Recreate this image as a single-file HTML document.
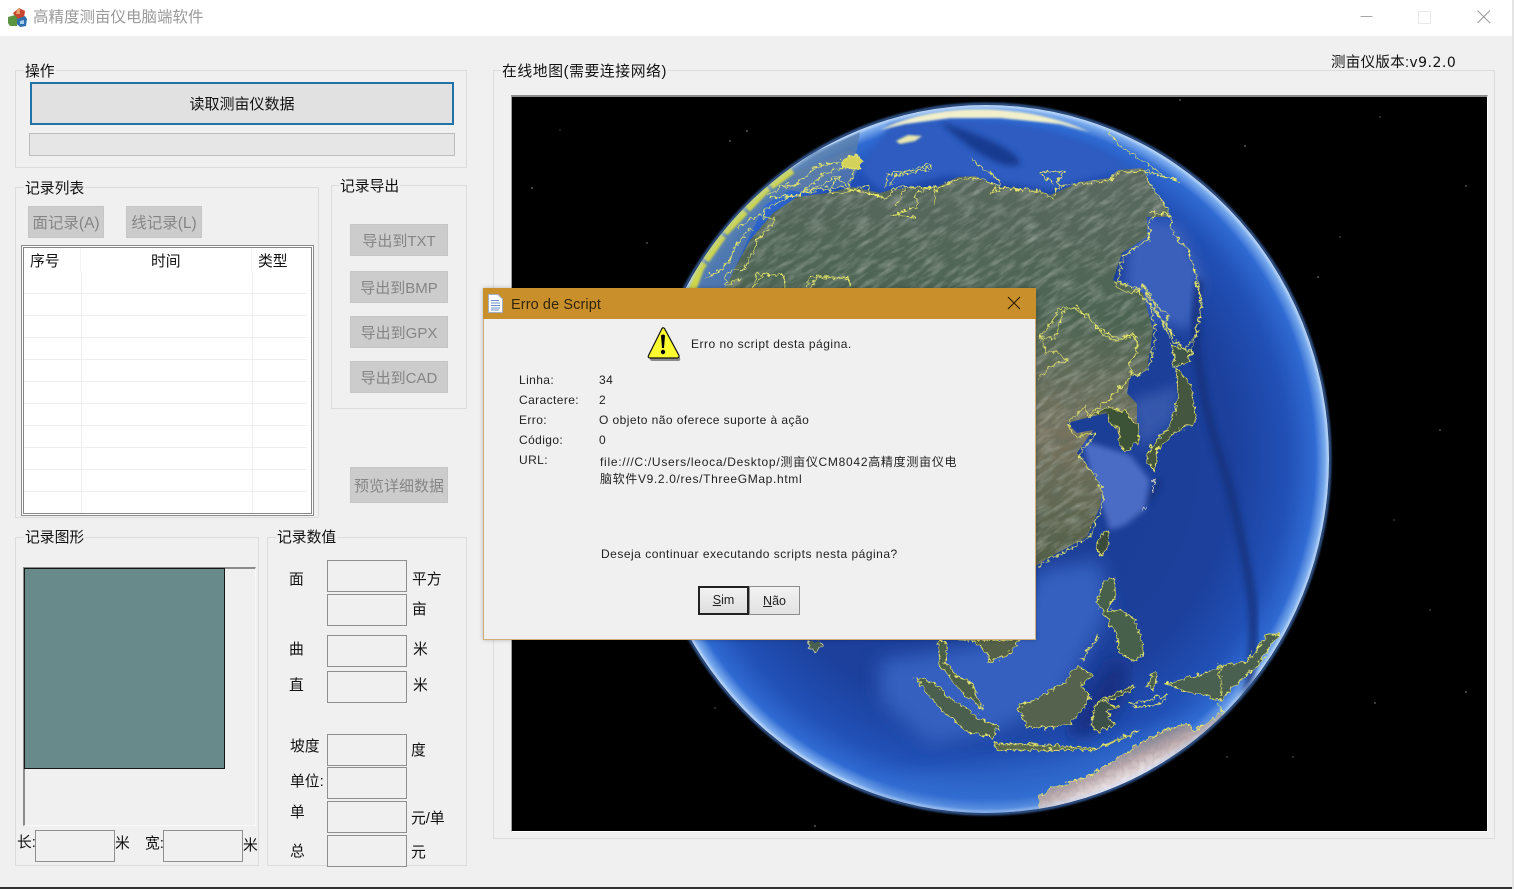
<!DOCTYPE html>
<html><head><meta charset="utf-8"><title>高精度测亩仪电脑端软件</title>
<style>
html,body{margin:0;padding:0;background:#f0f0f0;width:1514px;height:889px;overflow:hidden}
body{position:relative;font-family:"Liberation Sans","Noto Sans CJK SC",sans-serif;color:#111}
.a,.t,.g,.b,.i,.r{position:absolute}
.t{font-size:14.8px;line-height:20px;white-space:nowrap;margin-top:2px}
.g{border:1px solid #dcdcdc;box-sizing:border-box}
.b{background:#cccccc;color:#858585;font-size:15.5px;text-align:center;box-sizing:border-box;white-space:nowrap;border:1px solid #c6c6c6;padding-top:3px}
.i{border:1px solid #8f8f8f;background:#f0f0f0;box-sizing:border-box;width:80px;height:32px;left:327px}
.l{background:#f0f0f0;padding:0 1px}
.r{left:24px;width:283px;height:1px;background:#eeeeee}
.d{font-size:12px;line-height:16px;color:#222;letter-spacing:.5px;white-space:nowrap;position:absolute}
.m{letter-spacing:.4px}
</style></head><body>
<!-- title bar -->
<div class="a" style="left:0;top:0;width:1514px;height:36px;background:#fff"></div>
<svg class="a" style="left:6px;top:6px" width="24" height="22" viewBox="0 0 24 22">
<path d="M7 7 L13 2 L19 5 L18 12 L11 14Z" fill="#c8452f"/>
<path d="M11 3 L14 2 L14 8 L10 8Z" fill="#e8a070"/>
<path d="M2 11 L9 9 L12 13 L11 20 L4 20 L2 17Z" fill="#5b9440"/>
<path d="M11 13 L19 10 L21 13 L20 20 L14 21 L11 18Z" fill="#2e6fb0"/>
<path d="M14 15 L18 14 L18 18 L14 18Z" fill="#a9cce8"/>
</svg>
<div class="t" style="left:33px;top:6px;font-size:15.5px;color:#9a9a9a">高精度测亩仪电脑端软件</div>
<svg class="a" style="left:1350px;top:0" width="150" height="36" viewBox="1350 0 150 36" fill="none">
<path d="M1360.5 16.5H1372.5" stroke="#a8a8a8"/>
<rect x="1418.5" y="11.5" width="12" height="12" stroke="#e8e8e8"/>
<path d="M1477.5 10.5L1490 23M1490 10.5L1477.5 23" stroke="#999"/>
</svg>
<!-- version -->
<div class="t" style="left:1331px;top:51px;font-size:14.5px;letter-spacing:.3px">测亩仪版本:<span style="font-family:'DejaVu Sans';font-size:14px;letter-spacing:.5px">v9.2.0</span></div>

<!-- 操作 -->
<div class="g" style="left:15px;top:70px;width:452px;height:98px"></div>
<div class="t l" style="left:24px;top:60px">操作</div>
<div class="a" style="left:30px;top:82px;width:424px;height:43px;box-sizing:border-box;border:2px solid #1f73a8;background:#e1e1e1;text-align:center;font-size:15px;line-height:41px;overflow:hidden">读取测亩仪数据</div>
<div class="a" style="left:29px;top:133px;width:426px;height:23px;box-sizing:border-box;border:1px solid #bcbcbc;background:#e6e6e6"></div>

<!-- 记录列表 -->
<div class="g" style="left:15px;top:187px;width:304px;height:331px"></div>
<div class="t l" style="left:24px;top:177px">记录列表</div>
<div class="b" style="left:28px;top:206px;width:76px;height:32px;line-height:28px">面记录(A)</div>
<div class="b" style="left:126px;top:206px;width:76px;height:32px;line-height:28px">线记录(L)</div>
<div class="a" style="left:21px;top:245px;width:293px;height:271px;box-sizing:border-box;border:1px solid #8a8a8a;background:#fff">
 <div style="position:absolute;left:1px;top:1px;right:1px;bottom:1px;border:1px solid #858585"></div>
</div>
<div class="a" style="left:81px;top:272px;width:1px;height:241px;background:#eeeeee"></div>
<div class="a" style="left:252px;top:272px;width:1px;height:241px;background:#eeeeee"></div>
<div class="a" style="left:80px;top:248px;width:1px;height:24px;background:#f4f4f4"></div>
<div class="a" style="left:251px;top:248px;width:1px;height:24px;background:#f4f4f4"></div>
<div class="r" style="top:293px"></div><div class="r" style="top:315px"></div><div class="r" style="top:337px"></div><div class="r" style="top:359px"></div><div class="r" style="top:381px"></div><div class="r" style="top:403px"></div><div class="r" style="top:425px"></div><div class="r" style="top:447px"></div><div class="r" style="top:469px"></div><div class="r" style="top:491px"></div>
<div class="t" style="left:30px;top:250px">序号</div>
<div class="t" style="left:151px;top:250px">时间</div>
<div class="t" style="left:258px;top:250px">类型</div>

<!-- 记录导出 -->
<div class="g" style="left:331px;top:185px;width:136px;height:224px"></div>
<div class="t l" style="left:339px;top:175px">记录导出</div>
<div class="b" style="left:350px;top:224px;width:98px;height:32px;line-height:28px;font-size:15px">导出到TXT</div>
<div class="b" style="left:350px;top:271px;width:98px;height:32px;line-height:28px;font-size:15px">导出到BMP</div>
<div class="b" style="left:350px;top:316px;width:98px;height:32px;line-height:28px;font-size:15px">导出到GPX</div>
<div class="b" style="left:350px;top:361px;width:98px;height:32px;line-height:28px;font-size:15px">导出到CAD</div>
<div class="b" style="left:350px;top:467px;width:98px;height:36px;line-height:32px;font-size:15px">预览详细数据</div>

<!-- 记录图形 -->
<div class="g" style="left:15px;top:537px;width:244px;height:329px"></div>
<div class="t l" style="left:24px;top:526px">记录图形</div>
<div class="a" style="left:23px;top:567px;width:233px;height:259px;box-sizing:border-box;border-top:2px solid #8a8a8a;border-left:2px solid #8a8a8a;border-right:1px solid #fafafa;border-bottom:1px solid #fafafa"></div>
<div class="a" style="left:24px;top:568px;width:201px;height:201px;box-sizing:border-box;border:1px solid #161616;background:#688a8a"></div>
<div class="t" style="left:17px;top:831px">长:</div>
<div class="i" style="left:35px;top:830px"></div>
<div class="t" style="left:115px;top:832px">米</div>
<div class="t" style="left:145px;top:832px">宽:</div>
<div class="i" style="left:163px;top:830px"></div>
<div class="t" style="left:243px;top:834px">米</div>

<!-- 记录数值 -->
<div class="g" style="left:267px;top:537px;width:200px;height:329px"></div>
<div class="t l" style="left:276px;top:526px">记录数值</div>
<div class="i" style="top:560px"></div>
<div class="i" style="top:594px"></div>
<div class="i" style="top:635px"></div>
<div class="i" style="top:671px"></div>
<div class="i" style="top:734px"></div>
<div class="i" style="top:767px"></div>
<div class="i" style="top:801px"></div>
<div class="i" style="top:835px"></div>
<div class="t" style="left:289px;top:568px">面</div>
<div class="t" style="left:289px;top:638px">曲</div>
<div class="t" style="left:289px;top:674px">直</div>
<div class="t" style="left:290px;top:735px">坡度</div>
<div class="t" style="left:290px;top:770px">单位:</div>
<div class="t" style="left:290px;top:801px">单</div>
<div class="t" style="left:290px;top:840px">总</div>
<div class="t" style="left:412px;top:568px">平方</div>
<div class="t" style="left:412px;top:598px">亩</div>
<div class="t" style="left:413px;top:638px">米</div>
<div class="t" style="left:413px;top:674px">米</div>
<div class="t" style="left:411px;top:739px">度</div>
<div class="t" style="left:411px;top:807px">元/单</div>
<div class="t" style="left:411px;top:841px">元</div>

<!-- map group -->
<div class="g" style="left:493px;top:70px;width:1002px;height:769px"></div>
<div class="t l" style="left:501px;top:60px;letter-spacing:.6px">在线地图(需要连接网络)</div>
<div class="a" style="left:511px;top:95px;width:977px;height:737px;box-sizing:border-box;border-top:2px solid #8c8c8c;border-left:1px solid #a0a0a0;border-right:1px solid #fff;border-bottom:1px solid #fff"></div>
<svg class="a" style="left:512px;top:97px" width="975" height="734" viewBox="512 97 975 734">
<defs>
<radialGradient id="oc" cx=".5" cy=".5" r=".5">
<stop offset="0" stop-color="#1a3c92"/><stop offset=".72" stop-color="#1c409c"/><stop offset=".88" stop-color="#2150b6"/><stop offset=".96" stop-color="#2f6ad2"/><stop offset=".99" stop-color="#7eaeee"/><stop offset="1" stop-color="#c8dffa"/>
</radialGradient>
<linearGradient id="ld" gradientUnits="userSpaceOnUse" x1="1100" y1="150" x2="1050" y2="620">
<stop offset="0" stop-color="#5d6a62"/><stop offset=".35" stop-color="#4c6452"/><stop offset=".6" stop-color="#77735f"/><stop offset=".78" stop-color="#5e6650"/><stop offset="1" stop-color="#46563c"/>
</linearGradient>
<linearGradient id="au" gradientUnits="userSpaceOnUse" x1="1040" y1="490" x2="1115" y2="625"><stop offset="0" stop-color="#4a6cb0"/><stop offset=".4" stop-color="#7c7f90"/><stop offset=".7" stop-color="#b8a8ac"/><stop offset="1" stop-color="#f0e8ea"/></linearGradient>
<filter id="n" x="-10%" y="-10%" width="120%" height="120%"><feTurbulence type="fractalNoise" baseFrequency=".05 .2" numOctaves="4" seed="4"/><feColorMatrix values="0 0 0 0 .62  0 0 0 0 .65  0 0 0 0 .60  1.6 0 0 0 -.66"/></filter>
<filter id="n2" x="-10%" y="-10%" width="120%" height="120%"><feTurbulence type="fractalNoise" baseFrequency=".07 .16" numOctaves="4" seed="11"/><feColorMatrix values="0 0 0 0 .10  0 0 0 0 .15  0 0 0 0 .12  1.6 0 0 0 -.66"/></filter>
<filter id="b1"><feGaussianBlur stdDeviation="1"/></filter>
<filter id="b3"><feGaussianBlur stdDeviation="3"/></filter>
<filter id="b5"><feGaussianBlur stdDeviation="6"/></filter>
<filter id="b8"><feGaussianBlur stdDeviation="9"/></filter>
<filter id="jit" filterUnits="userSpaceOnUse" x="512" y="97" width="975" height="734"><feTurbulence type="turbulence" baseFrequency=".13" numOctaves="2" seed="7" result="t"/><feDisplacementMap in="SourceGraphic" in2="t" scale="7" xChannelSelector="R" yChannelSelector="G"/><feGaussianBlur stdDeviation=".3"/></filter>
<clipPath id="gc"><ellipse cx="986" cy="459" rx="343" ry="354"/></clipPath>
<clipPath id="lc"><path id="landp" d="M723 290 L750 240 773 213 797 197 827 193 853 187 880 193 890 190 916 187 937 187 958 177 975 176 1000 187 1038 190 1050 195 1080 182 1109 178 1118 170 1143 168 1151 187 1166 207 1170 217 1147 217 1147 237 1122 253 1113 280 1143 293 1153 330 1147 370 1130 377 1127 393 1137 404 1137 440 1123 450 1116 427 1107 413 1090 417 1067 423 1077 433 1093 430 1077 453 1093 473 1102 490 1100 507 1087 537 1050 557 1037 565 1030 575 1030 600 700 600Z"/></clipPath>
</defs>
<rect x="512" y="97" width="975" height="734" fill="#000"/>
<g fill="#8a8f98"><circle cx="747" cy="131" r=".8"/><circle cx="730" cy="141" r=".7"/><circle cx="532" cy="188" r=".8"/><circle cx="647" cy="243" r=".7"/><circle cx="1180" cy="100" r=".7"/><circle cx="1245" cy="146" r=".8"/><circle cx="1318" cy="277" r=".8"/><circle cx="1340" cy="237" r=".6"/><circle cx="1380" cy="117" r=".6"/><circle cx="1466" cy="186" r=".7"/><circle cx="1440" cy="430" r=".7"/><circle cx="1394" cy="520" r=".6"/><circle cx="1293" cy="757" r=".6"/><circle cx="1375" cy="703" r=".7"/><circle cx="1227" cy="757" r=".6"/><circle cx="1466" cy="692" r=".8"/><circle cx="815" cy="826" r=".8"/><circle cx="715" cy="708" r=".6"/><circle cx="562" cy="470" r=".6"/><circle cx="560" cy="130" r=".5"/><circle cx="1430" cy="610" r=".6"/></g>
<ellipse cx="986" cy="459" rx="344" ry="355" fill="none" stroke="#4a80d8" stroke-width="2.5" opacity=".8" filter="url(#b1)"/>
<ellipse cx="986" cy="459" rx="343" ry="354" fill="url(#oc)"/>
<g clip-path="url(#gc)">
 <!-- ocean shading -->
 <path d="M890 125 C960 110 1080 125 1130 170 L1143 165 1118 170 1050 190 950 175 880 190 860 170Z" fill="#2f5bc0" filter="url(#b3)"/>
 <path d="M940 122 C980 135 1020 150 1020 165 C1000 170 970 150 940 122Z" fill="#183a90" filter="url(#b3)"/>
 <path d="M1130 215 L1180 225 1205 280 1190 330 1150 320 1125 285Z" fill="#3a60bc" filter="url(#b5)"/>
 <path d="M1200 280 C1190 340 1200 370 1203 390 C1210 430 1225 470 1230 490 C1240 530 1250 580 1253 610 C1255 660 1250 700 1225 760" fill="none" stroke="#12307c" stroke-width="9" opacity=".8" filter="url(#b3)"/>
 <path d="M1105 515 C1130 525 1150 500 1160 480" fill="none" stroke="#123078" stroke-width="7" opacity=".7" filter="url(#b3)"/>
 <path d="M1082 440 L1130 455 1150 480 1145 510 1125 525 1110 530 1100 500 1090 470Z" fill="#4c6cc4" filter="url(#b3)"/>
 <path d="M1130 400 L1180 385 1175 420 1140 450Z" fill="#3557ac" filter="url(#b5)"/>
 <path d="M1040 570 L1100 560 1110 610 1060 700 1000 730 930 745 880 700 880 660 950 650 1000 640Z" fill="#3660c0" filter="url(#b8)"/>
 <path d="M1110 660 C1140 650 1130 720 1080 740 1050 730 1100 690 1110 660Z" fill="#142e80" filter="url(#b8)"/>
 <path d="M850 790 C950 760 1060 760 1110 740 L1200 720 1250 700 1200 790 1000 830Z" fill="#3470d0" opacity=".5" filter="url(#b8)"/>
 <!-- land -->
 <use href="#landp" fill="url(#ld)"/>
 <g clip-path="url(#lc)">
  <rect x="560" y="60" width="800" height="700" transform="rotate(-32 960 400)" filter="url(#n)" opacity=".55"/>
  <rect x="560" y="60" width="800" height="700" transform="rotate(-32 960 400)" filter="url(#n2)" opacity=".45"/>
 </g>
 <!-- upper-left Europe sea tint -->
 <path d="M690 290 L705 250 760 190 815 152 860 132 855 160 820 185 790 190 765 205 750 235 725 290Z" fill="#567ca8" opacity=".8"/>
 <path d="M776 188 L800 170 850 150 862 160 850 185 800 192Z" fill="#5e7fa8" opacity=".7"/>
 <!-- ice -->
 <path d="M880 130 C930 104 1020 100 1090 132 L1060 124 1000 118 950 118 905 124Z" fill="#f2f0cc" filter="url(#b1)"/>
 <path d="M896 141 L908 135 922 136 915 141 900 144Z" fill="#e8e8b0" filter="url(#b1)"/>
 <!-- yellow rim glow top left -->
 <path d="M692 290 L700 268 725 232 765 190 792 170" fill="none" stroke="#dcdf40" stroke-width="8" stroke-dasharray="30 3" opacity=".9" filter="url(#b1)"/>
 <g fill="none" stroke="#e8e86a" stroke-width="1" stroke-linejoin="round" filter="url(#jit)">
  <g transform="translate(680,90) scale(.4209,.3333)">
   <path vector-effect="non-scaling-stroke" d="M210 320 L270 310 340 290 400 290 430 300 470 315 490 320 500 290 540 285 580 290 610 285 660 262 700 258 730 270 760 290 850 298 880 318 900 280 950 275 1020 265 1040 240 1100 237 1120 290 1155 350 1165 375 1130 365 1115 380 1110 445 1050 490 1035 570 1080 590 1125 660 1150 700 1185 770"/>
   <path vector-effect="non-scaling-stroke" d="M500 370 L560 345 555 310 600 280 M510 340 L530 290 M495 370 L560 375 M605 290 L600 340 M480 290 L490 250 540 235 595 222 590 232 510 250 490 285"/>
   <path vector-effect="non-scaling-stroke" d="M850 240 L910 238 890 270 905 290 M855 250 L880 275"/>
   <path vector-effect="non-scaling-stroke" d="M1015 120 L1050 175 1100 210 1140 250 1190 270 M1100 237 L1130 250 1180 262"/>
   <path vector-effect="non-scaling-stroke" d="M1110 360 L1160 370 1165 420 1200 470 1225 570 1232 650 1225 720 1195 770 M1095 580 L1125 650 1160 740"/>
   <path vector-effect="non-scaling-stroke" d="M170 590 L180 550 240 550 245 590 M300 590 L320 560 395 560 400 590"/>
   <path vector-effect="non-scaling-stroke" d="M850 740 L900 650 940 645 990 710 1040 740 1070 725 1085 770"/>
   <path vector-effect="non-scaling-stroke" d="M690 200 L715 235 730 240 760 270 730 305 770 285"/>
  </g>
  <g transform="translate(640,130) scale(.3333)">
   <path vector-effect="non-scaling-stroke" d="M600 85 L640 70 665 85 650 112 610 105Z" fill="#d4d25a"/>
   <path vector-effect="non-scaling-stroke" d="M640 112 L620 170 590 135 560 180 600 185 640 170 680 160 680 185 720 195 M600 90 L520 105 470 155 420 170 M610 105 L540 130 470 195 440 190 M590 130 L520 170 460 190"/>
   <path vector-effect="non-scaling-stroke" d="M440 195 L400 215 370 235 365 260 400 260 370 305 340 320 345 340 310 410 250 425 255 460 300 440 M280 340 L260 390 240 410 190 440 M330 290 L270 350"/>
   <path vector-effect="non-scaling-stroke" d="M340 465 L365 432 420 430 430 465 M490 465 L510 435 620 435 625 465"/>
   <path vector-effect="non-scaling-stroke" d="M380 190 L440 155 M290 290 L350 250 380 225"/>
  </g>
  <g transform="translate(1030,280) scale(.3333)">
   <path vector-effect="non-scaling-stroke" d="M250 0 L255 15 300 35 340 10 370 70 410 100 400 120 430 175 M335 10 L370 130 370 180 350 265 300 285 M490 0 L510 60 505 100 490 170 480 220 440 225 420 190"/>
   <path vector-effect="non-scaling-stroke" d="M20 170 L70 170 90 90 130 80 170 105 210 155 260 180 310 155 315 210 290 240 300 275 270 315 225 360 180 390 170 410 160 370 105 430 135 465 195 450 140 520 190 580 215 630 210 680 170 770 60 830 20 855"/>
   <path vector-effect="non-scaling-stroke" d="M20 290 L60 250 105 235 70 210 40 215 30 170"/>
   <path vector-effect="non-scaling-stroke" d="M180 400 L230 375 275 390 320 430 320 480 280 510 265 490 260 440 230 420 230 395" fill="#3d5238"/>
   <path vector-effect="non-scaling-stroke" d="M420 190 L480 210 470 240 430 255 Z" fill="#3f5548"/>
   <path vector-effect="non-scaling-stroke" d="M430 258 L475 305 492 400 490 425 440 445 405 475 375 505 370 565 345 545 342 518 400 450 425 410 440 340Z" fill="#44573f"/>
   <path vector-effect="non-scaling-stroke" d="M225 745 C195 765 185 800 210 820 C230 790 235 760 225 745Z" fill="#3a4c3a"/>
   <path vector-effect="non-scaling-stroke" d="M335 690 L345 675 M370 590 L360 630" stroke="#e8e8c8"/>
  </g>
  <g transform="translate(680,560) scale(.4209,.3333)">
   <path vector-effect="non-scaling-stroke" d="M610 240 L630 240 625 300 650 340 690 370 715 440 690 420 650 370 610 300Z" fill="#4c5e48"/>
   <path vector-effect="non-scaling-stroke" d="M660 235 L800 235 785 270 735 302 720 270 690 235Z" fill="#55614a"/>
   <path vector-effect="non-scaling-stroke" d="M1000 60 L1025 50 1030 100 1010 150 1040 140 1075 170 1095 240 1095 280 1070 297 1040 270 1030 210 1000 150 985 120Z" fill="#47604c"/>
   <path vector-effect="non-scaling-stroke" d="M990 220 L950 295"/>
   <path vector-effect="non-scaling-stroke" d="M555 348 L590 360 650 420 720 480 755 490 740 530 680 510 620 450Z" fill="#4b5e50"/>
   <path vector-effect="non-scaling-stroke" d="M800 435 L860 400 910 360 940 310 975 340 950 370 970 410 920 490 870 500 820 495Z" fill="#55624e"/>
   <path vector-effect="non-scaling-stroke" d="M970 490 L985 420 1030 395 1075 370 1060 395 1000 420 1040 440 1010 450 1030 490 990 510Z" fill="#3e5048"/>
   <path vector-effect="non-scaling-stroke" d="M740 545 L800 545 870 550 930 555 985 560 1085 505 1060 525 980 565 860 565 750 565Z" fill="#5a6a50"/>
   <path vector-effect="non-scaling-stroke" d="M1150 365 L1230 340 1290 310 1345 300 1390 220 1420 220 1400 250 1370 310 1340 340 1290 400 1280 420 1240 400 1200 390Z" fill="#4a5e50"/>
   <path vector-effect="non-scaling-stroke" d="M1115 340 L1130 335 1120 385 1105 375Z" fill="#4a5e50"/>
   <path vector-effect="non-scaling-stroke" d="M1060 425 L1150 405 1140 425 1080 435Z"/>
   <path vector-effect="non-scaling-stroke" d="M850 742 L848 710 880 680 960 650 1010 610 1060 570 1130 515 1200 485 1215 510 1290 450 1330 480 1180 640 900 770Z" fill="url(#au)"/>
   <path vector-effect="non-scaling-stroke" d="M1270 420 L1290 460 M1280 320 L1280 400"/>
   <path vector-effect="non-scaling-stroke" d="M305 240 L300 260 320 272 335 250 330 240" stroke="#d8e0b0" fill="#4a5e50"/>
  </g>
 </g>
 <ellipse cx="986" cy="459" rx="341.5" ry="352.5" fill="none" stroke="#a8ccf8" stroke-width="1.6" opacity=".55" filter="url(#b1)"/>
</g>
</svg>

<!-- script error dialog -->
<div class="a" style="left:483px;top:288px;width:553px;height:352px;box-sizing:border-box;border:1px solid #cfae7a;border-top:0;background:#f0f0f0;box-shadow:0 0 4px rgba(0,0,0,.25)"></div>
<div class="a" style="left:483px;top:288px;width:553px;height:31px;background:#c98f2b"></div>
<svg class="a" style="left:487px;top:294px" width="17" height="19" viewBox="0 0 17 19">
<path d="M1.5 .5H11L15.5 5V18.5H1.5Z" fill="#fff" stroke="#9fb0c8"/>
<path d="M4 6.5H12M4 9H13M4 11.5H13M4 14H13M4 16H12" stroke="#6a8fc8"/>
</svg>
<div class="a" style="left:511px;top:295px;font-size:14.5px;line-height:20px;color:#33260e;letter-spacing:.1px">Erro de Script</div>
<svg class="a" style="left:1007px;top:296px" width="14" height="14" viewBox="0 0 14 14" fill="none"><path d="M1 1L13 13M13 1L1 13" stroke="#2a1a08" stroke-width="1.1"/></svg>

<svg class="a" style="left:646px;top:326px" width="36" height="36" viewBox="0 0 36 36">
<path d="M18 4 L34 32 Q35 35 32 35 L7 35 Q3 35 4 32 Z" fill="#8a8a8a"/>
<path d="M16 2.5 Q17 1 18.5 2.5 L33 29.5 Q33.5 32 31 32 L4 32 Q1.5 32 2.5 29.5Z" fill="#fbfb30" stroke="#111" stroke-width="1.2"/>
<path d="M15 9.5 Q17 7.5 19 9.5 L18 22 H16Z" fill="#000"/>
<circle cx="17" cy="26" r="2.2" fill="#000"/>
</svg>
<div class="d" style="left:691px;top:336px">Erro no script desta página.</div>
<div class="d m" style="left:519px;top:372px">Linha:</div><div class="d m" style="left:599px;top:372px">34</div>
<div class="d m" style="left:519px;top:392px">Caractere:</div><div class="d m" style="left:599px;top:392px">2</div>
<div class="d m" style="left:519px;top:412px">Erro:</div><div class="d" style="left:599px;top:412px;letter-spacing:.44px">O objeto não oferece suporte à ação</div>
<div class="d m" style="left:519px;top:432px">Código:</div><div class="d m" style="left:599px;top:432px">0</div>
<div class="d m" style="left:519px;top:452px">URL:</div>
<div class="d" style="left:600px;top:454px;letter-spacing:.72px">file:///C:/Users/leoca/Desktop/测亩仪CM8042高精度测亩仪电</div>
<div class="d" style="left:600px;top:471px;letter-spacing:.65px">脑软件V9.2.0/res/ThreeGMap.html</div>
<div class="d" style="left:601px;top:546px">Deseja continuar executando scripts nesta página?</div>
<div class="a" style="left:698px;top:586px;width:51px;height:29px;box-sizing:border-box;border:2px solid #222;background:linear-gradient(#f2f2f2,#dedede);text-align:center;font-size:12.5px;line-height:25px;color:#222"><u>S</u>im</div>
<div class="a" style="left:749px;top:586px;width:51px;height:29px;box-sizing:border-box;border:1px solid #8c8c8c;background:linear-gradient(#f2f2f2,#e2e2e2);text-align:center;font-size:12.5px;line-height:29px;color:#222"><u>N</u>ão</div>

<!-- screen edges -->
<div class="a" style="left:0;top:887px;width:1514px;height:2px;background:#333"></div>
<div class="a" style="left:1512px;top:0;width:2px;height:889px;background:#e4e4e4"></div>
</body></html>
